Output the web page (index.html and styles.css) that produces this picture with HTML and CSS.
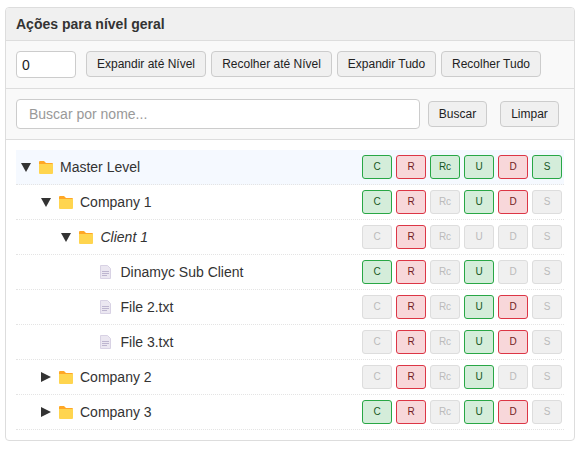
FILE: index.html
```html
<!DOCTYPE html>
<html lang="en">
<head>
  <meta charset="UTF-8">
  <meta name="viewport" content="width=device-width, initial-scale=1.0">
  <title>Ações</title>
  <link rel="stylesheet" href="styles.css">
</head>
<body>
  <svg class="defs" width="0" height="0">
    <symbol id="down" viewBox="0 0 10 10"><path d="M0 1h10L5 10z"/></symbol>
    <symbol id="right" viewBox="0 0 10 10"><path d="M0 0v10l10-5z"/></symbol>
    <symbol id="folder" viewBox="0 0 14 13">
      <path fill="#ffa726" d="M0 1a1 1 0 0 1 1-1h4l2 2h6a1 1 0 0 1 1 1v3H0z"/>
      <path fill="#ffd54f" d="M0 3h14v9a1 1 0 0 1-1 1H1a1 1 0 0 1-1-1z"/>
    </symbol>
    <symbol id="file" viewBox="0 0 11 14">
      <path fill="#ebe7f1" stroke="#d8d2e4" d="M.5.5h7l3 3v10H.5z"/>
      <path fill="#bdb5cf" d="M2 6h7v1H2zM2 8h7v1H2zM2 10h5v1H2z"/>
    </symbol>
  </svg>

  <div class="panel">
    <div class="panel-head">Ações para nível geral</div>

    <div class="bar">
      <input class="level" type="text" value="0">
      <button class="btn btn-first">Expandir até Nível</button>
      <button class="btn">Recolher até Nível</button>
      <button class="btn">Expandir Tudo</button>
      <button class="btn">Recolher Tudo</button>
    </div>

    <div class="bar search">
      <input class="search-input" type="text" placeholder="Buscar por nome...">
      <button class="btn btn-search">Buscar</button>
      <button class="btn btn-clear">Limpar</button>
    </div>

    <div class="tree">
      <div class="row row-top">
        <svg class="arrow"><use href="#down"/></svg>
        <svg class="folder"><use href="#folder"/></svg>
        <span class="name">Master Level</span>
        <div class="perms"><span class="p on">C</span><span class="p no">R</span><span class="p on">Rc</span><span class="p on">U</span><span class="p no">D</span><span class="p on">S</span></div>
      </div>
      <div class="row lvl1">
        <svg class="arrow"><use href="#down"/></svg>
        <svg class="folder"><use href="#folder"/></svg>
        <span class="name">Company 1</span>
        <div class="perms"><span class="p on">C</span><span class="p no">R</span><span class="p">Rc</span><span class="p on">U</span><span class="p no">D</span><span class="p">S</span></div>
      </div>
      <div class="row lvl2">
        <svg class="arrow"><use href="#down"/></svg>
        <svg class="folder"><use href="#folder"/></svg>
        <span class="name client">Client 1</span>
        <div class="perms"><span class="p">C</span><span class="p no">R</span><span class="p">Rc</span><span class="p">U</span><span class="p">D</span><span class="p">S</span></div>
      </div>
      <div class="row lvl3">
        <svg class="file"><use href="#file"/></svg>
        <span class="name">Dinamyc Sub Client</span>
        <div class="perms"><span class="p on">C</span><span class="p no">R</span><span class="p">Rc</span><span class="p on">U</span><span class="p">D</span><span class="p">S</span></div>
      </div>
      <div class="row lvl3">
        <svg class="file"><use href="#file"/></svg>
        <span class="name">File 2.txt</span>
        <div class="perms"><span class="p">C</span><span class="p no">R</span><span class="p">Rc</span><span class="p on">U</span><span class="p no">D</span><span class="p">S</span></div>
      </div>
      <div class="row lvl3">
        <svg class="file"><use href="#file"/></svg>
        <span class="name">File 3.txt</span>
        <div class="perms"><span class="p">C</span><span class="p no">R</span><span class="p">Rc</span><span class="p on">U</span><span class="p no">D</span><span class="p">S</span></div>
      </div>
      <div class="row lvl1">
        <svg class="arrow"><use href="#right"/></svg>
        <svg class="folder"><use href="#folder"/></svg>
        <span class="name">Company 2</span>
        <div class="perms"><span class="p">C</span><span class="p no">R</span><span class="p">Rc</span><span class="p on">U</span><span class="p">D</span><span class="p">S</span></div>
      </div>
      <div class="row lvl1">
        <svg class="arrow"><use href="#right"/></svg>
        <svg class="folder"><use href="#folder"/></svg>
        <span class="name">Company 3</span>
        <div class="perms"><span class="p on">C</span><span class="p no">R</span><span class="p">Rc</span><span class="p on">U</span><span class="p no">D</span><span class="p">S</span></div>
      </div>
    </div>
  </div>
</body>
</html>
```

FILE: styles.css
```css
* {
  box-sizing: border-box;
}
body {
  margin: 0;
  padding: 7px 5px 0 5px;
  background: #fff;
  color: #333;
  font-family: "Liberation Sans", Arial, sans-serif;
  font-size: 14px;
}
.defs {
  position: absolute;
}
.panel {
  width: 570px;
  height: 434px;
  border: 1px solid #ddd;
  border-radius: 4px;
  overflow: hidden;
}
.panel-head {
  height: 33px;
  padding-left: 10px;
  background: #f0f0f0;
  border-bottom: 1px solid #ddd;
  font-weight: bold;
  line-height: 32px;
}
.bar {
  display: flex;
  align-items: flex-start;
  height: 48px;
  padding: 10px 10px 0 10px;
  background: #f9f9f9;
  border-bottom: 1px solid #ddd;
}
.search {
  height: 51px;
  align-items: center;
  padding-top: 0;
}
.level {
  width: 60px;
  height: 27px;
  padding: 0 5px;
  border: 1px solid #ccc;
  border-radius: 4px;
  font: 14px "Liberation Sans", Arial, sans-serif;
  color: #222;
}
.search-input {
  width: 404px;
  height: 30px;
  padding: 0 12px;
  border: 1px solid #ccc;
  border-radius: 4px;
  font: 14px "Liberation Sans", Arial, sans-serif;
}
.search-input::placeholder {
  color: #999;
}
.btn {
  height: 26px;
  margin-left: 5px;
  padding: 0;
  background: #f0f0f0;
  border: 1px solid #ccc;
  border-radius: 4px;
  color: #222;
  font: 12px "Liberation Sans", Arial, sans-serif;
  width: 121px;
}
.btn-first {
  margin-left: 10px;
  width: 120px;
}
.btn:nth-of-type(3) {
  width: 99px;
}
.btn:nth-of-type(4) {
  width: 100px;
}
.btn-search {
  width: 59px;
  margin-left: 8px;
}
.btn-clear {
  width: 59px;
  margin-left: 13px;
}
.tree {
  padding: 10px 10px 0 10px;
}
.row {
  display: flex;
  align-items: center;
  height: 35px;
  border-bottom: 1px dotted #e4e4e4;
}
.row-top {
  background: #f5f9ff;
}
.lvl1 {
  padding-left: 20px;
}
.lvl2 {
  padding-left: 40px;
}
.lvl3 {
  padding-left: 84px;
}
.arrow {
  width: 10px;
  height: 10px;
  margin-left: 5px;
  fill: #333;
  flex: none;
}
.folder {
  width: 14px;
  height: 13px;
  margin-left: 8px;
  flex: none;
}
.file {
  width: 11px;
  height: 14px;
  flex: none;
}
.name {
  margin-left: 7px;
}
.lvl3 .name {
  margin-left: 9.5px;
}
.name.client {
  margin-left: 7.5px;
  font-style: italic;
}
.perms {
  display: flex;
  gap: 4px;
  margin-left: auto;
  margin-right: 2px;
}
.p {
  width: 30px;
  height: 24px;
  background: #f0f0f0;
  border: 1px solid #ddd;
  border-radius: 3px;
  color: #bbb;
  font-size: 10px;
  line-height: 22px;
  text-align: center;
}
.on {
  background: #d4edda;
  border-color: #28a745;
  color: #155724;
}
.no {
  background: #f8d7da;
  border-color: #dc3545;
  color: #721c24;
}
```
